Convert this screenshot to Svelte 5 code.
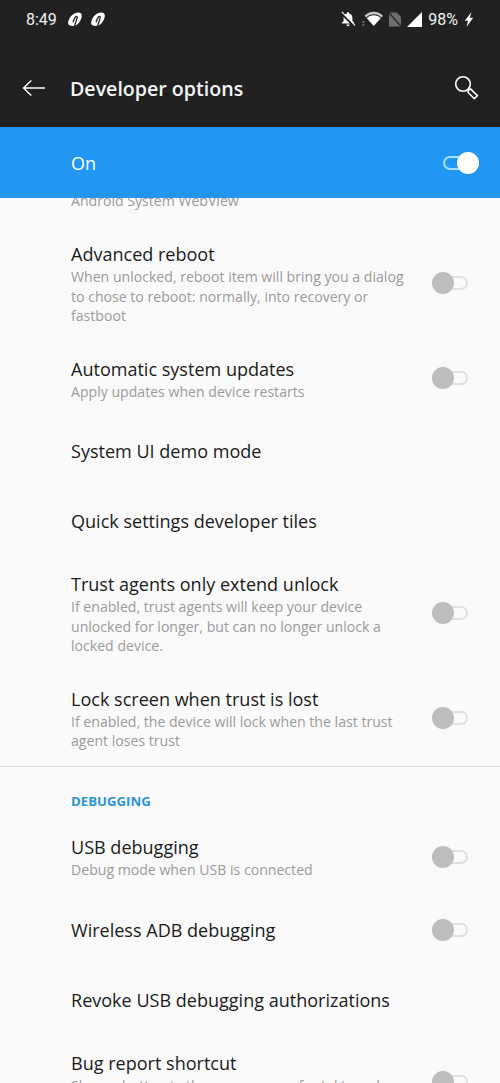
<script>
  const block1 = [
    { t: 'Advanced reboot', s: ['When unlocked, reboot item will bring you a dialog', 'to chose to reboot: normally, into recovery or', 'fastboot'], sw: true },
    { t: 'Automatic system updates', s: ['Apply updates when device restarts'], sw: true },
    { t: 'System UI demo mode', s: [] },
    { t: 'Quick settings developer tiles', s: [] },
    { t: 'Trust agents only extend unlock', s: ['If enabled, trust agents will keep your device', 'unlocked for longer, but can no longer unlock a', 'locked device.'], sw: true },
    { t: 'Lock screen when trust is lost', s: ['If enabled, the device will lock when the last trust', 'agent loses trust'], sw: true }
  ];
  const block2 = [
    { t: 'USB debugging', s: ['Debug mode when USB is connected'], sw: true },
    { t: 'Wireless ADB debugging', s: [], sw: true },
    { t: 'Revoke USB debugging authorizations', s: [] },
    { t: 'Bug report shortcut', s: ['Show a button in the power menu for taking a bug', 'report'], sw: true }
  ];
</script>

{#snippet row(item)}
  <div class="row" class:single={item.s.length === 0}>
    <div class="text">
      <div class="title">{item.t}</div>
      {#each item.s as line}
        <div class="summary">{line}</div>
      {/each}
    </div>
    {#if item.sw}
      <div class="switch"><span class="track"></span><span class="thumb"></span></div>
    {/if}
  </div>
{/snippet}

{#snippet appIcon()}
  <svg class="app" viewBox="0 0 14 14" width="14" height="14">
    <path d="M10.200 .4C13 .3 14.300 2.200 13.700 5C13 8.400 10.600 12.200 7.400 13.500C5.600 14.200 2.800 14.100 1.400 13.300C.1 12.500 -.1 11 .4 9.200C1.600 4.700 5.400 .6 10.200 .4Z" fill="#fff"/>
    <path d="M6.600 14.200L9.100 6C9.500 4.500 8.400 4 7.400 5C6.400 6 5.700 8 5 10.200" fill="none" stroke="#212121" stroke-width="1.300"/>
  </svg>
{/snippet}

<div class="page">
  <header class="top">
    <div class="status">
      <div class="left">
        <span class="time">8:49</span>
        {@render appIcon()}
        {@render appIcon()}
      </div>
      <div class="right">
        <svg viewBox="0 0 16 16" width="16" height="16">
          <path d="M8 1a1 1 0 0 1 1 1v.6c2.200.5 3.400 2.200 3.400 4.400v2.900l1.800 1.800v.8H1.800v-.8l1.800-1.800V7c0-2.200 1.200-3.900 3.400-4.400V2a1 1 0 0 1 1-1zM6.400 13.600h3.200a1.600 1.600 0 0 1-3.200 0z" fill="#fff"/>
          <path d="M1.200 1.800L14.200 15.200" stroke="#212121" stroke-width="2.400"/>
          <path d="M1.800 .8L15 14.400" stroke="#fff" stroke-width="1.100"/>
        </svg>
        <svg viewBox="0 0 21 16" width="21" height="16">
          <path d="M2.500 4.800C7.500 -.6 16 -.6 21 4.800L19.400 6.500C15 2.200 8.500 2.200 4.100 6.500z" fill="#c8c8c8"/>
          <path d="M4.800 7.200C8.800 3.400 14.700 3.400 18.700 7.200L11.750 15z" fill="#fff"/>
          <path d="M.3 10h2v2h-2zM.3 13h2v2h-2z" fill="#6a6a6a"/>
        </svg>
        <svg viewBox="0 0 12 15" width="12" height="15">
          <path d="M0 .5h7.500L12 5v9.500H0z" fill="#6e6e6e"/>
          <path d="M-.5 .2L12.500 15" stroke="#212121" stroke-width="1.300"/>
        </svg>
        <svg viewBox="0 0 15 15" width="15" height="15">
          <path d="M15 0V15H0z" fill="#fff"/>
        </svg>
        <span class="batt">98%</span>
        <svg viewBox="0 0 10 15" width="10" height="15">
          <path d="M7.500 0L.8 8.800h3.200L2.500 15l6.700-9.200H5.800z" fill="#fff"/>
        </svg>
      </div>
    </div>
    <div class="bar">
      <svg class="back" viewBox="0 0 24 18" width="24" height="18">
        <path d="M23 9H1.500M9.300 1.500L1.500 9l7.800 7.500" fill="none" stroke="#fff" stroke-width="1.400"/>
      </svg>
      <h1>Developer options</h1>
      <svg class="search" viewBox="0 0 26 26" width="26" height="26">
        <circle cx="9" cy="9" r="7.300" fill="none" stroke="#fff" stroke-width="1.600"/>
        <path d="M14.500 15.500l2-1.600 6.900 6.700-3.100 3.100-6.400-6.400z" fill="none" stroke="#fff" stroke-width="1.600" stroke-linejoin="round"/>
      </svg>
    </div>
  </header>

  <div class="master">
    <span>On</span>
    <div class="switch on"><span class="track"></span><span class="thumb"></span></div>
  </div>

  <main class="list">
    <div class="clipped"><div class="summary">Android System WebView</div></div>
    {#each block1 as item}{@render row(item)}{/each}
    <div class="divider"></div>
    <div class="category">DEBUGGING</div>
    {#each block2 as item}{@render row(item)}{/each}
  </main>
</div>

<style>
  :global(body) { margin: 0; background: #fafafa; }
  .page {
    width: 500px;
    height: 1083px;
    overflow: hidden;
    display: flex;
    flex-direction: column;
    font-family: "Open Sans", "Noto Sans", sans-serif;
    background: #fafafa;
  }
  .top { background: #212121; height: 127px; flex: none; display: flex; flex-direction: column; }
  .status {
    height: 38px;
    display: flex;
    justify-content: space-between;
    align-items: center;
    padding: 0 26px 0 26px;
    color: #f2f2f2;
    font-family: Roboto, sans-serif;
    font-size: 16px;
  }
  .left, .right { display: flex; align-items: center; }
  .left { gap: 9px; }
  .right { gap: 6px; }
  .time { margin-right: 2px; }
  .bar { flex: 1; display: flex; align-items: center; padding: 11px 20px 0 22px; }
  .bar h1 { margin: 0 0 0 24px; font-size: 19.600px; font-weight: 600; color: #f5f5f5; flex: 1; }
  .master {
    height: 71px;
    flex: none;
    background: #2196f3;
    display: flex;
    align-items: center;
    justify-content: space-between;
    padding: 0 21px 0 71px;
    color: #fff;
    font-size: 18px;
    box-sizing: border-box;
  }
  .list { flex: 1; overflow: hidden; }
  .clipped { height: 28px; display: flex; align-items: flex-end; padding: 0 71px 16px; box-sizing: border-box; overflow: hidden; }
  .clipped .summary { flex: none; }
  .row {
    display: flex;
    align-items: center;
    padding: 17px 21px 15px 71px;
    box-sizing: border-box;
    flex: none;
  }
  .row.single { height: 70px; padding-top: 0; padding-bottom: 0; }
  .row:not(.single) .switch { margin-bottom: 2px; }
  .text { flex: 1; min-width: 0; }
  .title { font-size: 18.050px; line-height: 22px; color: #1a1a1a; white-space: nowrap; }
  .title + .summary { margin-top: 2px; }
  .summary { font-size: 14.100px; line-height: 19.500px; color: #9b9b9b; white-space: nowrap; }
  .switch { position: relative; width: 47px; height: 22px; flex: none; }
  .track {
    position: absolute;
    left: 0;
    top: 4px;
    width: 36px;
    height: 14px;
    box-sizing: border-box;
    border: 2px solid #e0e0e0;
    border-radius: 8px;
  }
  .thumb {
    position: absolute;
    left: 0;
    top: 0;
    width: 22px;
    height: 22px;
    border-radius: 50%;
    background: #bdbdbd;
  }
  .on .track { left: 11px; border-color: #a6dcff; }
  .on .thumb { left: 25px; background: #fff; }
  .divider { height: 1px; background: #dcdcdc; }
  .category {
    height: 52.500px;
    box-sizing: border-box;
    padding: 26px 71px 0;
    font-size: 13.200px;
    line-height: 16px;
    font-weight: 700;
    color: #2a95d8;
  }
</style>
